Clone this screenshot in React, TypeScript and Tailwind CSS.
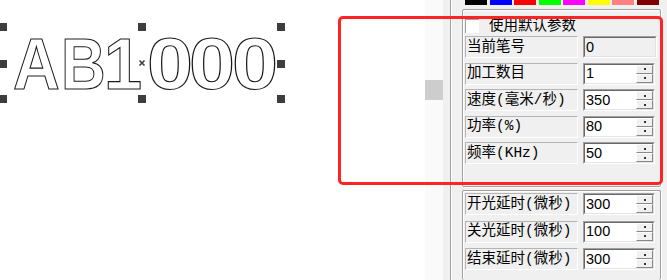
import React from "react";

const swatches = ["#000000", "#0000ff", "#ff0000", "#00ff00", "#ff00ff", "#ffff00", "#ff8080", "#800000"];

type Row = { label: string; value: string; spin?: boolean; disabled?: boolean };

const topRows: Row[] = [
  { label: "当前笔号", value: "0", disabled: true },
  { label: "加工数目", value: "1", spin: true },
  { label: "速度(毫米/秒)", value: "350", spin: true },
  { label: "功率(%)", value: "80", spin: true },
  { label: "频率(KHz)", value: "50", spin: true },
];

const delayRows: Row[] = [
  { label: "开光延时(微秒)", value: "300", spin: true },
  { label: "关光延时(微秒)", value: "100", spin: true },
  { label: "结束延时(微秒)", value: "300", spin: true },
];

// glyph, left x, horizontal scale
const glyphs: [string, number, number][] = [
  ["A", 13, 0.9],
  ["B", 61, 0.86],
  ["1", 104, 0.95],
  ["0", 147, 1.15],
  ["0", 189, 1.15],
  ["0", 232, 1.15],
];

const handles = [
  [-1, 23],
  [138, 23],
  [277, 23],
  [-1, 60],
  [277, 60],
  [-1, 95],
  [138, 95],
  [277, 95],
];

const cjk = { fontFamily: '"Liberation Mono", "Noto Sans CJK SC", monospace' };
const latin = { fontFamily: '"Liberation Sans", Arial, sans-serif' };

const SpinButton = () => (
  <div className="flex flex-1 items-center justify-center bg-[#f0f0f0] border-t border-l border-t-white border-l-white border-b border-r border-b-[#888] border-r-[#888]">
    <div className="w-[2px] h-[2px] bg-[#333]" />
  </div>
);

const ParamRow = ({ row }: { row: Row }) => (
  <div className="flex items-stretch h-[22px]">
    <div
      className="w-[113px] flex items-center pl-[1px] bg-[#f0f0f0] border-t border-l border-t-[#b4b4b4] border-l-[#b4b4b4] border-b border-r border-b-white border-r-white text-[14.5px] leading-none text-black whitespace-nowrap overflow-hidden"
      style={cjk}
    >
      {row.label}
    </div>
    <div
      className={`ml-[5px] flex border-t border-l border-t-[#a0a0a0] border-l-[#a0a0a0] border-b border-r border-b-white border-r-white ${
        row.spin ? "w-[72px]" : "w-[74px]"
      }`}
    >
      <div
        className={`flex flex-1 border-t border-l border-t-[#696969] border-l-[#696969] border-b border-r border-b-[#e3e3e3] border-r-[#e3e3e3] ${
          row.disabled ? "bg-[#f0f0f0]" : "bg-white"
        }`}
      >
        <div className="flex-1 flex items-center pl-[1px] text-[14.5px] leading-none text-black" style={latin}>
          {row.value}
        </div>
        {row.spin && (
          <div className="w-[17px] flex flex-col">
            <SpinButton />
            <SpinButton />
          </div>
        )}
      </div>
    </div>
  </div>
);

const Canvas = () => (
  <div className="flex w-[443px] h-full bg-white">
    <div className="w-[425px] h-full">
      <svg width="425" height="280">
        {glyphs.map(([ch, x, sx], i) => (
          <text
            key={i}
            transform={`translate(${x} 89) scale(${sx} 1)`}
            fontFamily="Liberation Sans, Arial, sans-serif"
            fontWeight="bold"
            fontSize="72"
            fill="#ffffff"
            stroke="#1a1a1a"
            strokeWidth="1.1"
          >
            {ch}
          </text>
        ))}
        {handles.map(([x, y]) => (
          <rect key={`${x}-${y}`} x={x} y={y} width="8" height="8" fill="#3d3d3d" />
        ))}
        <path d="M139.5 60.5 L144.5 65.5 M144.5 60.5 L139.5 65.5" stroke="#3d3d3d" strokeWidth="1.6" />
      </svg>
    </div>
    <div className="w-[18px] h-full bg-[#fafafa] pt-[80px]">
      <div className="h-[20px] bg-[#cdcdcd]" />
    </div>
  </div>
);

const GroupBox = ({ className, children }: { className: string; children: React.ReactNode }) => (
  <div className={`border border-[#a0a0a0] shadow-[inset_1px_1px_0_#fff,1px_1px_0_#fff] rounded-[2px] ${className}`}>
    {children}
  </div>
);

export default function App() {
  return (
    <div className="relative w-[667px] h-[280px] overflow-hidden flex bg-[#f0f0f0]">
      <Canvas />
      <div className="flex-1 flex h-full pl-[7px] bg-[#f0f0f0]">
        <div className="h-full border-l border-l-[#a0a0a0] shadow-[inset_1px_0_0_#fff] w-[2px]" />
        <div className="w-[199px] ml-[10px] flex flex-col">
          <div className="flex gap-[2.5px] pl-[3px] h-[5px]">
            {swatches.map((c) => (
              <div key={c} className="w-[22px] h-full" style={{ backgroundColor: c }} />
            ))}
          </div>
          <GroupBox className="mt-[4px] h-[178px] pl-[2px] pr-[3px] pt-[9px]">
            <div className="flex items-center h-[14px] mb-[3px]">
              <div className="w-[14px] h-[14px] bg-white border-t border-l border-t-[#a0a0a0] border-l-[#a0a0a0]" />
              <span className="ml-[10px] text-[14.5px] leading-none text-black" style={cjk}>
                使用默认参数
              </span>
            </div>
            <div className="flex flex-col gap-[4.5px]">
              {topRows.map((r) => (
                <ParamRow key={r.label} row={r} />
              ))}
            </div>
          </GroupBox>
          <GroupBox className="mt-[3px] flex-1 pl-[2px] pr-[3px] pt-[2px] border-b-0">
            <div className="flex flex-col gap-[5.5px]">
              {delayRows.map((r) => (
                <ParamRow key={r.label} row={r} />
              ))}
            </div>
          </GroupBox>
        </div>
      </div>
      <div className="absolute left-[338px] top-[16px] w-[325px] h-[169px] border-[3px] border-[#fe2424] rounded-[5px] pointer-events-none" />
    </div>
  );
}
